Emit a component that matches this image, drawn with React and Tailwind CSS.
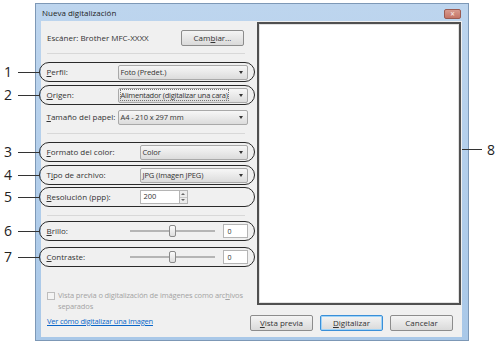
import React from "react";

const font = { fontFamily: '"Open Sans", "Noto Sans", sans-serif' };

function Callout({ n }) {
  return (
    <>
      <span className="absolute left-[-36px] top-1/2 -translate-y-1/2 text-[14px] leading-none text-[#222]">
        {n}
      </span>
      <span className="absolute left-[-22px] top-1/2 h-px w-[21px] bg-[#333]" />
    </>
  );
}

function Row({ n, ring = true, children }) {
  return (
    <div
      className={`relative -ml-[8px] flex h-[20px] w-[216px] items-center rounded-full border-[1.5px] pl-[6.5px] pr-[6.5px] ${
        ring ? "border-[#2a2a2a]" : "border-transparent"
      }`}
    >
      {n && <Callout n={n} />}
      {children}
    </div>
  );
}

function Select({ value, focus }) {
  return (
    <div className="flex h-[15px] min-w-0 flex-1 items-center justify-between rounded-[2px] border border-[#a9a9a9] bg-gradient-to-b from-[#f7f7f7] to-[#dcdcdc] pl-[2px] pr-[4px]">
      <span
        className={`whitespace-nowrap text-[7.5px] leading-[10px] text-[#333] ${
          focus ? "tracking-[-0.25px] outline outline-1 outline-dotted outline-[#777]" : "tracking-[-0.1px]"
        }`}
      >
        {value}
      </span>
      <span className="ml-[2px] h-0 w-0 shrink-0 border-x-[2.5px] border-t-[3px] border-x-transparent border-t-[#333]" />
    </div>
  );
}

function Slider() {
  return (
    <div className="flex flex-1 items-center">
      <div className="relative ml-[6px] h-[12px] w-[85px]">
        <div className="absolute left-0 right-0 top-[5px] h-[2px] border border-[#b5b5b5] bg-[#e6e6e6]" />
        <div className="absolute left-[39px] top-0 h-[12px] w-[7px] rounded-[2px] border border-[#8a8a8a] bg-gradient-to-b from-[#fbfbfb] to-[#dedede]" />
      </div>
      <div className="ml-auto flex h-[14px] w-[25px] items-center border border-[#b5b5b5] bg-white pl-[4px] text-[7px] text-[#333]">
        0
      </div>
    </div>
  );
}

function Button({ children, primary }) {
  return (
    <div
      className={`flex h-[16px] w-[63px] items-center justify-center rounded-[2px] border bg-gradient-to-b from-[#f4f4f4] to-[#dadada] text-[8px] text-[#333] ${
        primary ? "border-[#3a8fd8] shadow-[inset_0_0_0_1px_#9fd3f7]" : "border-[#8c8c8c]"
      }`}
    >
      {children}
    </div>
  );
}

export default function App() {
  return (
    <div className="h-[346px] w-[500px] overflow-hidden bg-white pt-[3px]" style={font}>
      <div className="ml-[35px] h-[338px] w-[434px] border border-[#7d98b6] bg-gradient-to-b from-[#bdd5ee] to-[#a9c8e8]">
        <div className="flex h-[17px] items-start justify-between">
          <span className="ml-[6px] mt-[5px] text-[8px] leading-none text-[#1e1e1e]">
            Nueva digitalización
          </span>
          <div className="mr-[7px] mt-[5px] flex h-[10px] w-[17px] items-center justify-center rounded-[2px] border border-[#9a5b52] bg-gradient-to-b from-[#d89a8e] to-[#c47466] text-[8px] font-bold leading-none text-[#f3dcd7]">
            ×
          </div>
        </div>

        <div className="ml-[5px] flex h-[316px] w-[421px] bg-[#f0f0f0]">
          <div className="flex w-[209px] flex-col pl-[6px] text-[8px] leading-none text-[#333]">
            <div className="mt-[9px] flex h-[16px] items-center justify-between pr-[6px]">
              <span>Escáner: Brother MFC-XXXX</span>
              <Button>
                Cam<u>b</u>iar...
              </Button>
            </div>
            <div className="mr-[5px] mt-[7px] h-px bg-[#d8d8d8]" />

            <div className="mt-[8px]">
              <Row n="1">
                <span className="w-[71px]">
                  <u>P</u>erfil:
                </span>
                <Select value="Foto (Predet.)" />
              </Row>
            </div>
            <div className="mt-[3px]">
              <Row n="2">
                <span className="w-[71px]">
                  <u>O</u>rigen:
                </span>
                <Select value="Alimentador (digitalizar una cara)" focus />
              </Row>
            </div>
            <div className="mt-[2px]">
              <Row ring={false}>
                <span className="w-[71px]">
                  <u>T</u>amaño del papel:
                </span>
                <Select value="A4 - 210 x 297 mm" />
              </Row>
            </div>
            <div className="mr-[5px] mt-[6px] h-px bg-[#d8d8d8]" />

            <div className="mt-[8px]">
              <Row n="3">
                <span className="w-[93px]">
                  <u>F</u>ormato del color:
                </span>
                <Select value="Color" />
              </Row>
            </div>
            <div className="mt-[3px]">
              <Row n="4">
                <span className="w-[93px]">
                  T<u>i</u>po de archivo:
                </span>
                <Select value="JPG (Imagen JPEG)" />
              </Row>
            </div>
            <div className="mt-[2px]">
              <Row n="5">
                <span className="w-[93px]">
                  <u>R</u>esolución (ppp):
                </span>
                <div className="flex h-[14px] w-[40px] items-center border border-[#b5b5b5] bg-white pl-[3px] text-[7.5px]">
                  200
                </div>
                <div className="flex h-[14px] w-[8px] flex-col border border-l-0 border-[#b5b5b5] bg-[#ececec]">
                  <span className="flex flex-1 items-center justify-center border-b border-[#c8c8c8]">
                    <span className="h-0 w-0 border-x-[2px] border-b-[2px] border-x-transparent border-b-[#666]" />
                  </span>
                  <span className="flex flex-1 items-center justify-center">
                    <span className="h-0 w-0 border-x-[2px] border-t-[2px] border-x-transparent border-t-[#666]" />
                  </span>
                </div>
              </Row>
            </div>
            <div className="mr-[5px] mt-[8px] h-px bg-[#d8d8d8]" />

            <div className="mt-[5px]">
              <Row n="6">
                <span className="w-[77px]">
                  <u>B</u>rillo:
                </span>
                <Slider />
              </Row>
            </div>
            <div className="mt-[6px]">
              <Row n="7">
                <span className="w-[77px]">
                  <u>C</u>ontraste:
                </span>
                <Slider />
              </Row>
            </div>

            <div className="mt-[23px] flex items-start gap-[3px] text-[#a3a3a3]">
              <span className="mt-[2px] h-[8px] w-[8px] shrink-0 border border-[#bdbdbd] bg-[#f4f4f4]" />
              <span className="flex flex-col whitespace-nowrap text-[7.5px] leading-[11px] tracking-[-0.15px]">
                <span>
                  Vista previa o digitalización de imágenes como arc<u>h</u>ivos
                </span>
                <span>separados</span>
              </span>
            </div>
            <span className="mt-[4px] text-[7.5px] leading-[11px] tracking-[-0.2px] text-[#0a66c8] underline">
              Ver cómo digitalizar una imagen
            </span>
          </div>

          <div className="flex w-[212px] flex-col">
            <div className="relative ml-[7px] mt-[1px] h-[283px] w-[204px] border-2 border-[#505050] bg-white shadow-[inset_0_0_0_1px_#e2e2e2]">
              <span className="absolute left-[203px] top-[125px] h-px w-[20px] bg-[#333]" />
              <span className="absolute left-[228px] top-[119px] text-[14px] leading-none text-[#222]">8</span>
            </div>
            <div className="mt-[10px] flex gap-[7px]">
              <Button>
                <u>V</u>ista previa
              </Button>
              <Button primary>
                <u>D</u>igitalizar
              </Button>
              <Button>Cancelar</Button>
            </div>
          </div>
        </div>
      </div>
    </div>
  );
}
